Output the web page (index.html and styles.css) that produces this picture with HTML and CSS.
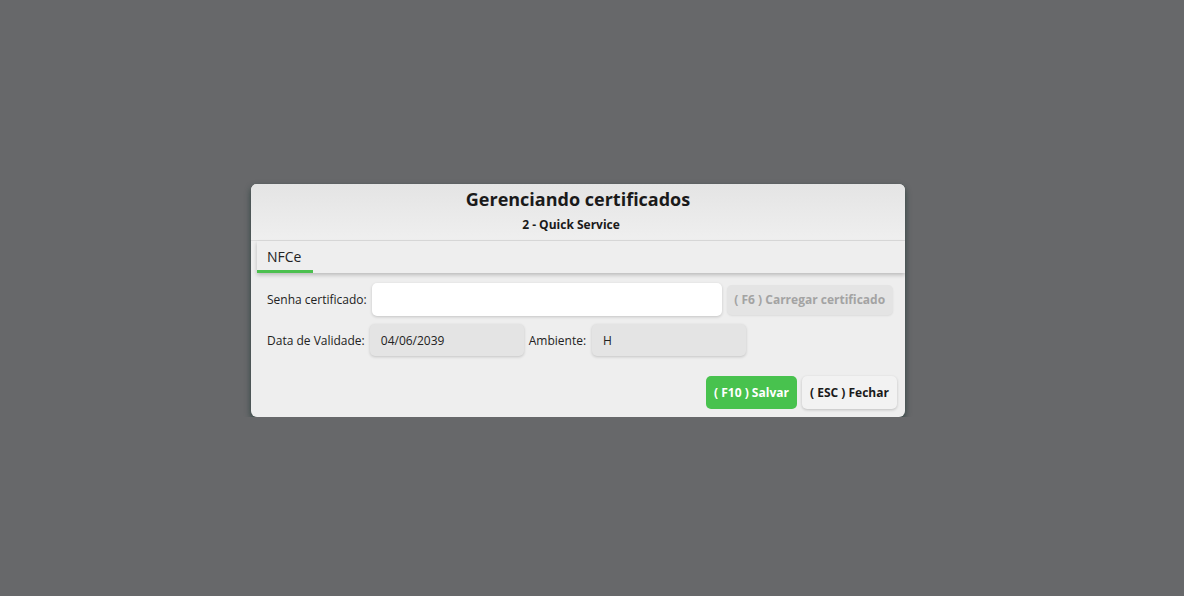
FILE: index.html
```html
<!DOCTYPE html>
<html lang="pt-BR">
<head>
    <meta charset="UTF-8">
    <meta name="viewport" content="width=device-width, initial-scale=1.0">
    <title>Gerenciando certificados</title>
    <link rel="stylesheet" href="styles.css">
</head>
<body>

<div class="modal">
    <div class="modal-header">
        <h1>Gerenciando certificados</h1>
        <p class="subtitle">2 - Quick Service</p>
    </div>

    <div class="tabs">
        <div class="tab active">NFCe</div>
    </div>

    <div class="modal-body">
        <div class="row">
            <label class="label">Senha certificado:</label>
            <input type="password" class="input input-senha">
            <button class="btn btn-disabled">( F6 ) Carregar certificado</button>
        </div>
        <div class="row">
            <label class="label">Data de Validade:</label>
            <div class="field">04/06/2039</div>
            <label class="label label-ambiente">Ambiente:</label>
            <div class="field">H</div>
        </div>
    </div>

    <div class="modal-footer">
        <button class="btn btn-save">( F10 ) Salvar</button>
        <button class="btn btn-close">( ESC ) Fechar</button>
    </div>
</div>

</body>
</html>
```

FILE: styles.css
```css
body {
    font-family: 'Open Sans', 'Noto Sans', sans-serif;
    background-color: #67686a;
    margin: 0;
    padding: 184px 0 0 251px;
    color: #222;
}

.modal {
    width: 654px;
    height: 233px;
    background-color: #eeeeee;
    border-radius: 6px;
    box-shadow: 0 3px 6px rgba(20, 50, 45, 0.7);
    overflow: hidden;
    display: flex;
    flex-direction: column;
}

.modal-header {
    height: 57px;
    box-sizing: border-box;
    text-align: center;
    padding-top: 3px;
    background: linear-gradient(#e4e4e4, #efefef);
    border-bottom: 1px solid #dcdcdc;
}

h1 {
    margin: 0;
    font-size: 18px;
    font-weight: 700;
    color: #1a1a1a;
    line-height: 25px;
}

.subtitle {
    margin: 4px 14px 0 0;
    font-size: 12px;
    font-weight: 700;
    color: #1a1a1a;
}

.tabs {
    margin-left: 6px;
    height: 32px;
    display: flex;
    background-color: #eeeeee;
    box-shadow: 0 2px 4px rgba(0, 0, 0, 0.22);
}

.tab {
    font-size: 14px;
    color: #222;
    padding: 6px 12px 0 10px;
    box-sizing: border-box;
}

.tab.active {
    border-bottom: 3px solid #4cc04f;
}

.modal-body {
    padding: 10px 11px 0 16px;
}

.row {
    display: flex;
    align-items: center;
    gap: 5px;
    margin-bottom: 8px;
}

.row > * {
    flex-shrink: 0;
    white-space: nowrap;
}

.label {
    font-size: 12px;
    color: #222;
}

.label-ambiente {
    margin-right: 1px;
}

.input {
    border: none;
    outline: none;
    background-color: #ffffff;
    border-radius: 5px;
    height: 33px;
    padding: 0;
    box-shadow: 0 1px 3px rgba(0, 0, 0, 0.18);
}

.input-senha {
    width: 350px;
}

.field {
    width: 143px;
    height: 32px;
    box-sizing: content-box;
    padding-left: 11px;
    display: flex;
    align-items: center;
    font-size: 12px;
    color: #222;
    background-color: #e4e4e4;
    border-radius: 5px;
    box-shadow: 0 1px 3px rgba(0, 0, 0, 0.18);
}

.btn {
    font-family: inherit;
    font-size: 12px;
    font-weight: 700;
    border: none;
    border-radius: 5px;
    cursor: pointer;
    height: 33px;
    padding: 0;
    white-space: nowrap;
}

.btn-disabled {
    height: 30px;
    width: 166px;
    color: #a3a3a3;
    background-color: #e4e4e4;
    box-shadow: 0 1px 2px rgba(0, 0, 0, 0.08);
}

.modal-footer {
    margin-top: auto;
    display: flex;
    justify-content: flex-end;
    gap: 5px;
    padding: 0 8px 8px 0;
}

.btn-save {
    width: 91px;
    background-color: #48c24e;
    color: #ffffff;
}

.btn-close {
    width: 95px;
    background-color: #f2f2f2;
    color: #1a1a1a;
    box-shadow: 0 1px 3px rgba(0, 0, 0, 0.2);
}
```
